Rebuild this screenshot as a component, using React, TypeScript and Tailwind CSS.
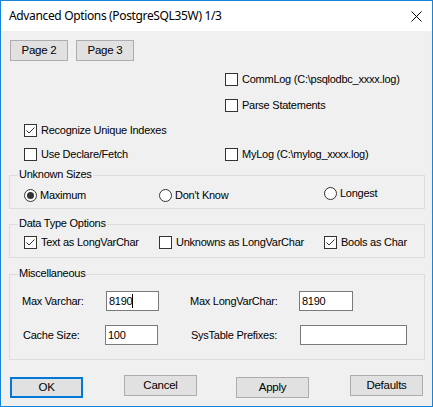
import React from 'react';

const font = { fontFamily: '"Liberation Sans", Arial, sans-serif' };

function Check({ checked = false }: { checked?: boolean }) {
  return (
    <span className="w-[13px] h-[13px] border border-[#333] bg-white shrink-0 flex items-center justify-center">
      {checked && (
        <svg width="11" height="11" viewBox="0 0 11 11">
          <polyline points="1.5,5.5 4,8 9.5,2.5" fill="none" stroke="#333" strokeWidth="1" />
        </svg>
      )}
    </span>
  );
}

function Radio({ checked = false }: { checked?: boolean }) {
  return (
    <span className="w-[13px] h-[13px] rounded-full border border-[#333] bg-white shrink-0 flex items-center justify-center">
      {checked && <span className="w-[7px] h-[7px] rounded-full bg-[#333]" />}
    </span>
  );
}

function CheckItem({ label, checked }: { label: string; checked?: boolean }) {
  return (
    <div className="flex items-center gap-[4px] h-[13px]">
      <Check checked={checked} />
      <span className="leading-[13px]">{label}</span>
    </div>
  );
}

function RadioItem({ label, checked }: { label: string; checked?: boolean }) {
  return (
    <div className="flex items-center gap-[3px] h-[13px]">
      <Radio checked={checked} />
      <span className="leading-[13px]">{label}</span>
    </div>
  );
}

function GroupBox({
  title,
  className,
  children,
}: {
  title: string;
  className: string;
  children: React.ReactNode;
}) {
  return (
    <div className={`relative ml-[8px] w-[416px] border border-[#dcdcdc] ${className}`}>
      <span className="absolute left-[8px] top-[-8px] bg-[#f0f0f0] px-[1px] leading-[13px]">{title}</span>
      {children}
    </div>
  );
}

function Btn({ label, width = 'w-[73px]', className = '' }: { label: string; width?: string; className?: string }) {
  return (
    <button className={`${width} h-[21px] bg-[#e1e1e1] text-black text-[11.5px] leading-[13px] ${className}`}>
      {label}
    </button>
  );
}

function Edit({ value, width, caret }: { value: string; width: string; caret?: boolean }) {
  return (
    <div className={`${width} h-[20px] bg-white border border-[#7a7a7a] flex items-center pl-[2px] shrink-0`}>
      <span className="leading-[13px]">{value}</span>
      {caret && <span className="w-[1px] h-[14px] bg-black" />}
    </div>
  );
}

export default function App() {
  return (
    <div
      className="w-[433px] h-[407px] border border-[#1883d7] bg-[#f0f0f0] flex flex-col text-[11px] tracking-[-0.25px] text-black overflow-hidden"
      style={font}
    >
      <div className="h-[30px] bg-white flex items-center justify-between pl-[8px] pr-[9px] shrink-0">
        <span
          className="text-[12px] tracking-[-0.35px]"
          style={{ fontFamily: '"Noto Sans", "Open Sans", sans-serif' }}
        >
          Advanced Options (PostgreSQL35W) 1/3
        </span>
        <svg width="11" height="11" viewBox="0 0 11 11" className="mr-[1px]">
          <path d="M0.5 0.5 L10.5 10.5 M10.5 0.5 L0.5 10.5" stroke="#000" strokeWidth="1" />
        </svg>
      </div>

      <div className="flex gap-[8px] pl-[9px] mt-[9px]">
        <Btn label="Page 2" width="w-[58px]" className="border border-[#adadad]" />
        <Btn label="Page 3" width="w-[58px]" className="border border-[#adadad]" />
      </div>

      <div className="flex pl-[23px] mt-[12px]">
        <div className="w-[201px]" />
        <CheckItem label="CommLog (C:\psqlodbc_xxxx.log)" />
      </div>
      <div className="flex pl-[23px] mt-[13px]">
        <div className="w-[201px]" />
        <CheckItem label="Parse Statements" />
      </div>
      <div className="flex pl-[23px] mt-[12px]">
        <div className="w-[201px]">
          <CheckItem label="Recognize Unique Indexes" checked />
        </div>
      </div>
      <div className="flex pl-[23px] mt-[11px]">
        <div className="w-[201px]">
          <CheckItem label="Use Declare/Fetch" />
        </div>
        <CheckItem label="MyLog (C:\mylog_xxxx.log)" />
      </div>

      <GroupBox title="Unknown Sizes" className="mt-[14px] h-[34px]">
        <div className="flex items-start pl-[14px] pt-[13px]">
          <div className="w-[135px]">
            <RadioItem label="Maximum" checked />
          </div>
          <div className="w-[165px]">
            <RadioItem label="Don't Know" />
          </div>
          <div className="mt-[-2px]">
            <RadioItem label="Longest" />
          </div>
        </div>
      </GroupBox>

      <GroupBox title="Data Type Options" className="mt-[15px] h-[34px]">
        <div className="flex pl-[14px] pt-[11px]">
          <div className="w-[135px]">
            <CheckItem label="Text as LongVarChar" checked />
          </div>
          <div className="w-[165px]">
            <CheckItem label="Unknowns as LongVarChar" />
          </div>
          <CheckItem label="Bools as Char" checked />
        </div>
      </GroupBox>

      <GroupBox title="Miscellaneous" className="mt-[16px] h-[86px]">
        <div className="flex items-center pl-[12px] mt-[16px]">
          <span className="w-[84px]">Max Varchar:</span>
          <Edit value="8190" width="w-[53px]" caret />
          <span className="ml-[31px] w-[109px]">Max LongVarChar:</span>
          <Edit value="8190" width="w-[54px]" />
        </div>
        <div className="flex items-center pl-[13px] mt-[14px]">
          <span className="w-[82px]">Cache Size:</span>
          <Edit value="100" width="w-[53px]" />
          <span className="ml-[33px] w-[109px]">SysTable Prefixes:</span>
          <Edit value="" width="w-[107px]" />
        </div>
      </GroupBox>

      <div className="flex items-start pl-[9px] mt-[15px]">
        <Btn label="OK" className="mt-[2px] border-2 border-[#0078d7]" />
        <Btn label="Cancel" className="ml-[41px] border border-[#adadad]" />
        <Btn label="Apply" className="ml-[39px] mt-[2px] border border-[#adadad]" />
        <Btn label="Defaults" className="ml-[41px] border border-[#adadad]" />
      </div>
    </div>
  );
}
